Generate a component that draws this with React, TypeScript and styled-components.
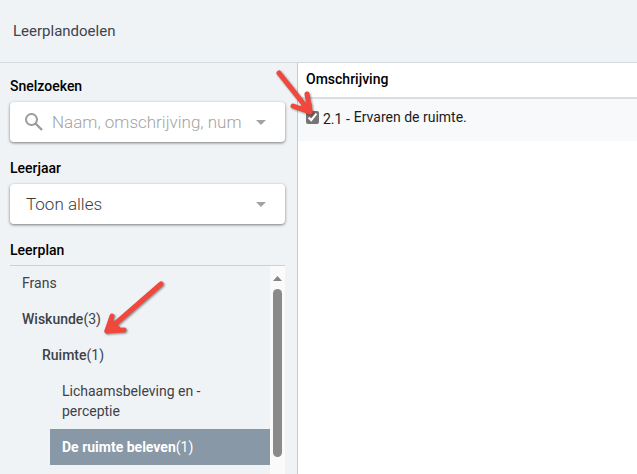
import React from "react";
import styled, { createGlobalStyle } from "styled-components";

const GlobalStyle = createGlobalStyle`
  body {
    margin: 0;
    background: #fff;
    color: #000;
    font-family: Roboto, "Liberation Sans", sans-serif;
    font-size: 14px;
    line-height: 20px;
  }
`;

const Page = styled.div`
  position: relative;
  display: flex;
  flex-direction: column;
  height: 100vh;
  overflow: hidden;
`;

const Header = styled.header`
  flex: none;
  padding: 21px 13px;
  background: #eff3f6;
  border-bottom: 1px solid #d3dbe1;
`;

const Title = styled.h1`
  margin: 0;
  color: #3f444a;
  font-size: 15px;
  font-weight: 400;
  line-height: 20px;
`;

const Columns = styled.div`
  flex: 1;
  display: flex;
  min-height: 0;
`;

const Sidebar = styled.aside`
  box-sizing: border-box;
  flex: 0 0 298px;
  display: flex;
  flex-direction: column;
  min-width: 0;
  min-height: 0;
  padding: 13px 12px 0 10px;
  background: #eff3f6;
  border-right: 1px solid #c3cad0;
`;

const Field = styled.div`
  display: flex;
  flex-direction: column;
  gap: 6px;
  margin-bottom: 16px;
`;

const FieldLabel = styled.label`
  font-weight: 500;
`;

const Control = styled.div`
  display: flex;
  align-items: center;
  gap: 8px;
  height: 40px;
  padding: 0 19px 0 14px;
  background: #fff;
  border-radius: 4px;
  box-shadow: 0 1px 3px rgba(0, 0, 0, 0.5);

  svg { flex: none; }
`;

const SearchInput = styled.input`
  flex: 1;
  min-width: 0;
  padding: 0;
  border: 0;
  outline: 0;
  background: transparent;
  color: #5a5a5a;
  font: 300 17px/24px Roboto, sans-serif;

  &::placeholder { color: #a3a3a3; opacity: 1; }
`;

const YearSelect = styled.select`
  flex: 1;
  min-width: 0;
  padding: 0 0 0 2px;
  border: 0;
  outline: 0;
  appearance: none;
  background: transparent;
  color: #3c3c3c;
  font: 300 17px/24px Roboto, sans-serif;
`;

const TreeTitle = styled.h2`
  margin: 0 0 5px;
  font-size: 14px;
  font-weight: 500;
  line-height: 20px;
`;

const TreePanel = styled.div`
  flex: 1;
  display: flex;
  min-height: 0;
  overflow: hidden;
  box-shadow: inset 0 1px #cbd1d6;
`;

const Tree = styled.ul`
  flex: 1;
  margin: 0;
  padding: 0;
  list-style: none;
`;

const TreeItem = styled.li<{ $level: number }>`
  padding-left: ${(p) => p.$level * 20}px;
`;

const TreeButton = styled.button<{ $selected?: boolean }>`
  display: block;
  width: 100%;
  padding: 8px 60px 8px 12px;
  border: 0;
  background: ${(p) => (p.$selected ? "#8898a7" : "transparent")};
  color: ${(p) => (p.$selected ? "#fff" : "#3d4248")};
  font: 400 14px/20px Roboto, sans-serif;
  text-align: left;

  b { font-weight: ${(p) => (p.$selected ? 700 : 500)}; }
`;

const ScrollTrack = styled.div`
  flex: 0 0 15px;
  display: flex;
  flex-direction: column;
  align-items: center;
  gap: 8px;
  margin-top: 1px;
  padding-top: 10px;
  background: #fafafa;

  svg { flex: none; }
`;

const ScrollThumb = styled.div`
  flex: none;
  width: 9px;
  height: 168px;
  border-radius: 5px;
  background: #8a8a8a;
`;

const Content = styled.main`
  flex: 1;
  min-width: 0;
`;

const GoalTable = styled.table`
  width: 100%;
  border-collapse: collapse;

  th {
    padding: 6px 8px 8px;
    border-bottom: 2px solid #dcdfe2;
    font-weight: 500;
    text-align: left;
  }
  td {
    padding: 5px 8px 11px;
    background: #f7f9fa;
  }
`;

const Goal = styled.label`
  display: flex;
  align-items: center;
  min-height: 26px;
  color: #1c1c1c;
`;

const GoalCheck = styled.input`
  width: 13px;
  height: 13px;
  margin: 0 4px 0 0;
  accent-color: #757575;
`;

const GoalCode = styled.span`
  padding: 4px 4px 0 0;
`;

const Arrows = styled.svg`
  position: absolute;
  top: 0;
  left: 0;
  pointer-events: none;
  filter: drop-shadow(1px 1px 1px rgba(0, 0, 0, 0.45));
`;

const Caret = () => (
  <svg width="10" height="5" viewBox="0 0 10 5" aria-hidden="true">
    <path d="M0 0h10L5 5z" fill="#a3a3a3" />
  </svg>
);

type Node = { name: string; level: number; count?: number; selected?: boolean };

const nodes: Node[] = [
  { name: "Frans", level: 0 },
  { name: "Wiskunde", level: 0, count: 3 },
  { name: "Ruimte", level: 1, count: 1 },
  { name: "Lichaamsbeleving en -perceptie", level: 2 },
  { name: "De ruimte beleven", level: 2, count: 1, selected: true },
];

export default function App() {
  return (
    <>
      <GlobalStyle />
      <Page>
        <Header>
          <Title>Leerplandoelen</Title>
        </Header>
        <Columns>
          <Sidebar>
            <Field>
              <FieldLabel htmlFor="search">Snelzoeken</FieldLabel>
              <Control>
                <svg width="20" height="20" viewBox="0 0 20 20" fill="none" stroke="#9b9b9b" aria-hidden="true">
                  <circle cx="7.5" cy="7.5" r="5.5" strokeWidth="2" />
                  <path d="M11.5 11.5l6.5 6.5" strokeWidth="2.4" />
                </svg>
                <SearchInput id="search" placeholder="Naam, omschrijving, num" />
                <Caret />
              </Control>
            </Field>
            <Field>
              <FieldLabel htmlFor="year">Leerjaar</FieldLabel>
              <Control>
                <YearSelect id="year">
                  <option>Toon alles</option>
                </YearSelect>
                <Caret />
              </Control>
            </Field>
            <TreeTitle>Leerplan</TreeTitle>
            <TreePanel>
              <Tree>
                {nodes.map((n) => (
                  <TreeItem key={n.name} $level={n.level}>
                    <TreeButton type="button" $selected={n.selected}>
                      {n.count ? <b>{n.name}</b> : n.name}
                      {n.count ? `(${n.count})` : null}
                    </TreeButton>
                  </TreeItem>
                ))}
              </Tree>
              <ScrollTrack aria-hidden="true">
                <svg width="9" height="5" viewBox="0 0 9 5">
                  <path d="M0 5h9L4.5 0z" fill="#858585" />
                </svg>
                <ScrollThumb />
              </ScrollTrack>
            </TreePanel>
          </Sidebar>
          <Content>
            <GoalTable>
              <thead>
                <tr>
                  <th scope="col">Omschrijving</th>
                </tr>
              </thead>
              <tbody>
                <tr>
                  <td>
                    <Goal>
                      <GoalCheck type="checkbox" defaultChecked />
                      <GoalCode>2.1 -</GoalCode>
                      <span>Ervaren de ruimte.</span>
                    </Goal>
                  </td>
                </tr>
              </tbody>
            </GoalTable>
          </Content>
        </Columns>
        <Arrows
          width="320"
          height="340"
          viewBox="0 0 320 340"
          fill="none"
          stroke="#f0483c"
          strokeWidth="5"
          strokeLinecap="round"
          strokeLinejoin="round"
          aria-hidden="true"
        >
          <path d="M279 73L310 112M307 94L310 112L293 106" />
          <path d="M309 104L310 112L302 108Z" fill="#f0483c" />
          <path d="M161 284L107 331M112 316L107 331L124 330" />
          <path d="M111 321L107 331L118 329Z" fill="#f0483c" />
        </Arrows>
      </Page>
    </>
  );
}
